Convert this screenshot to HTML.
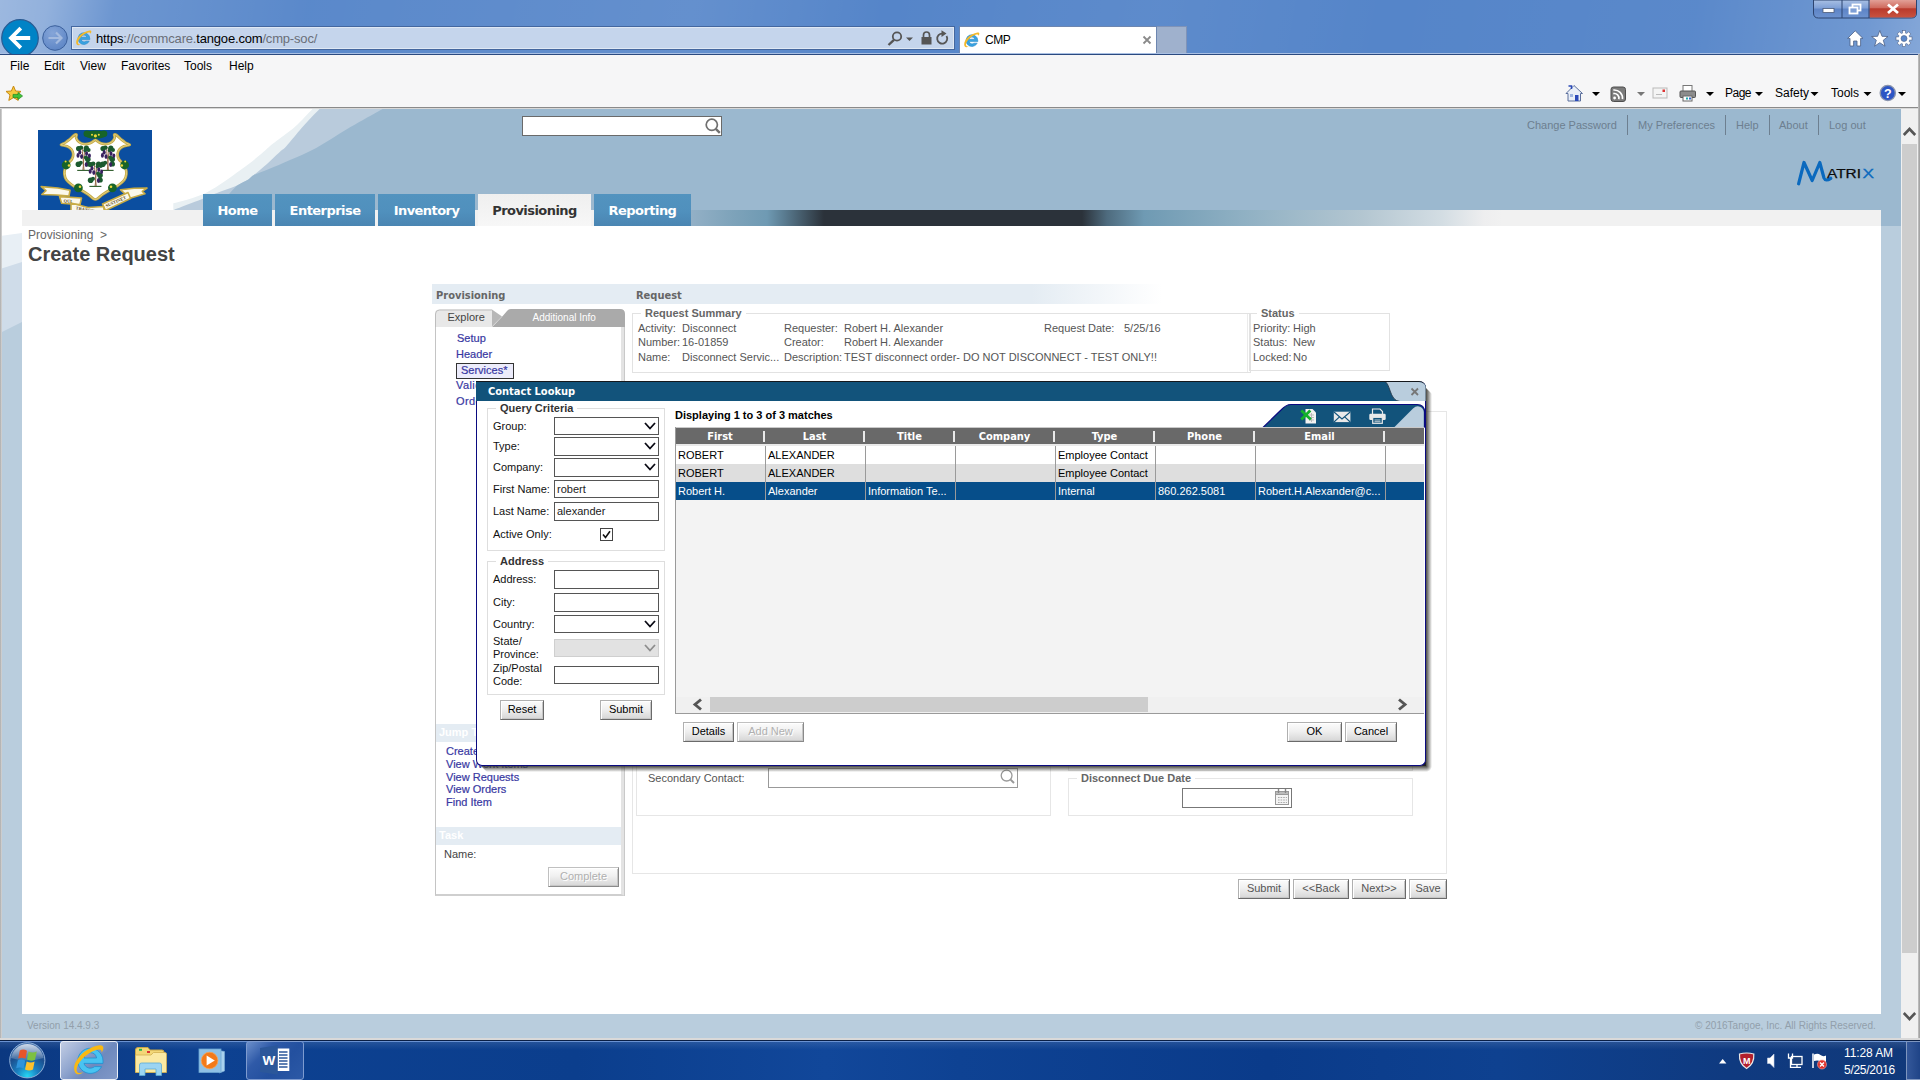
<!DOCTYPE html>
<html lang="en">
<head>
<meta charset="utf-8">
<title>CMP</title>
<style>
*{box-sizing:border-box;margin:0;padding:0}
html,body{width:1920px;height:1080px;overflow:hidden;background:#fff}
body{font-family:"Liberation Sans",Arial,sans-serif;font-size:11px;color:#555;position:relative}
.abs{position:absolute}
.t{position:absolute;white-space:nowrap;line-height:1}
/* ---------- browser chrome ---------- */
#titlebar{position:absolute;left:0;top:0;width:1920px;height:54px;
 background:
  linear-gradient(100deg,rgba(255,255,255,.42) 0,rgba(255,255,255,.36) 2.5%,rgba(255,255,255,.14) 6%,rgba(255,255,255,.03) 16%,rgba(255,255,255,.07) 30%,rgba(255,255,255,.09) 36%,rgba(255,255,255,0) 46%,rgba(255,255,255,.05) 60%,rgba(255,255,255,0) 72%,rgba(255,255,255,.03) 88%,rgba(255,255,255,.16) 97%,rgba(255,255,255,.28) 100%),
  #5585c9;}
#titleline{position:absolute;left:0;top:53px;width:1920px;height:2px;background:linear-gradient(#a9c0e4 0,#a9c0e4 50%,#2b4a80 50%,#2b4a80 100%)}
#menubar{position:absolute;left:0;top:55px;width:1920px;height:52px;background:#f6f6f7}
#chromeline{position:absolute;left:0;top:107px;width:1920px;height:2px;background:#8a8a8a;border-bottom:1px solid #d8d8d8}
.seg{font-family:"Liberation Sans",sans-serif;color:#000}
/* ---------- page ---------- */
#page{position:absolute;left:0;top:109px;width:1901px;height:931px;background:#b9cddd;overflow:hidden}
#taskbar{position:absolute;left:0;top:1040px;width:1920px;height:40px;
 background:linear-gradient(90deg,#0b3880 0,#0d4191 10%,#0b3e8d 30%,#11479a 43%,#0e4293 50%,#0a3b8a 66%,#0e4190 78%,#0f3a80 90%,#11397a 100%)}

/* page parts */
#hdr{position:absolute;left:0;top:109px;width:1901px;height:117px}
#white{position:absolute;left:22px;top:226px;width:1859px;height:788px;background:#fff}
#greyband{position:absolute;left:22px;top:210px;width:1859px;height:16px;
 background:linear-gradient(90deg,#f1f1f1 0,#f1f1f1 669px,#93b0c6 669px,#7ea3ba 710px,#6f9ab3 745px,#5a7c91 762px,#2b323a 802px,#2b323a 1060px,#4e6b7e 1085px,#6f9ab3 1122px,#8fb0c3 1220px,#b3c6d1 1340px,#d3dde3 1420px,#eeeeef 1462px,#f1f1f1 1480px,#f1f1f1 100%)}
.ntab{position:absolute;top:194px;height:32px;background:linear-gradient(#5293bf 0,#5090bd 55%,#4a85b2 100%);color:#fff;
 font-family:"DejaVu Sans",Verdana,sans-serif;font-weight:bold;font-size:13px;text-align:center;line-height:34px;letter-spacing:-0.55px}
.ntab.sel{background:linear-gradient(#efefef,#f7f7f7);color:#333}
.toplink{position:absolute;top:119px;font-size:11px;color:#6d7f90;line-height:13px;white-space:nowrap}
.topsep{position:absolute;top:115px;width:1px;height:20px;background:#6d7f90}
#search{position:absolute;left:522px;top:116px;width:200px;height:20px;background:#fff;border:1px solid #6a6a6a}

/* chrome widgets */
#addr{position:absolute;left:71px;top:26px;width:884px;height:24px;background:#c5d5ec;border:1px solid #44679f;box-shadow:inset 0 0 0 1px rgba(255,255,255,.45)}
#url{position:absolute;left:96px;top:31px;font-size:13px;line-height:16px;color:#6a6f78;white-space:nowrap;letter-spacing:-0.18px}
#url b{font-weight:normal;color:#000}
#btab{position:absolute;left:959px;top:26px;width:198px;height:27px;background:#fff;border:1px solid #6d86b0;border-bottom:none}
#newtab{position:absolute;left:1157px;top:26px;width:30px;height:27px;background:#9fb1cd;border:1px solid #7f93b8;border-left:none;border-bottom:none}
.menu{position:absolute;top:59px;font-size:12px;line-height:14px;color:#000;white-space:nowrap}
.cmd{position:absolute;top:86px;font-size:12px;line-height:14px;color:#000;white-space:nowrap}
.dd{position:absolute;width:0;height:0;border-left:4px solid transparent;border-right:4px solid transparent;border-top:4px solid #000}

/* content */
.tah{font-family:"DejaVu Sans Condensed","DejaVu Sans",Tahoma,sans-serif;font-weight:bold;font-size:11px}
#secthdr{position:absolute;left:432px;top:284px;width:740px;height:20px;background:linear-gradient(90deg,#e4ecf3 0,#e4ecf3 600px,#fff 730px)}
.fs{position:absolute;border:1px solid #e2e2e2}
.lg{position:absolute;background:#fff;padding:0 4px;font-weight:bold;font-size:11px;line-height:13px;color:#666;white-space:nowrap}
.x{position:absolute;white-space:nowrap;font-size:11px;line-height:13px;color:#555}
.lnk{position:absolute;white-space:nowrap;font-size:11px;line-height:13px;color:#3838a2;-webkit-text-stroke:.2px #3838a2}
.btn{position:absolute;height:20px;border:1px solid;border-color:#b0b0b0 #6a6a6a #6a6a6a #b0b0b0;background:linear-gradient(#fcfcfc 0,#f0f0f0 45%,#d6d6d6 100%);
 font-size:11px;line-height:17px;text-align:center;color:#000;white-space:nowrap;box-shadow:inset 1px 1px 0 #fff,inset -1px -1px 0 #c6c6c6}
.btn.g{color:#555}
.btn.dis{color:#b0b0b0;text-shadow:1px 1px 0 #fff;border-color:#c0c0c0 #8a8a8a #8a8a8a #c0c0c0}
.inp{position:absolute;background:#fff;border:1px solid #555;font-size:11px;line-height:15px;color:#222;padding-left:3px;white-space:nowrap}

/* dialog */
#dlgshadow{display:none}
#dlg{position:absolute;left:476px;top:381px;width:950px;height:385px;background:#fff;border:1px solid #0a0a80;border-top:none;border-radius:0 7px 6px 6px;overflow:hidden}
#dlgtitle{position:absolute;left:476px;top:381px;width:950px;height:20px;background:#12537b;border-radius:0 7px 0 0;overflow:hidden;border-top:1px solid #15181c}
.dl{position:absolute;white-space:nowrap;font-size:11px;line-height:13px;color:#111}
.dfs{position:absolute;border:1px solid #dedede}
.dlg-lg{position:absolute;background:#fff;padding:0 4px;font-weight:bold;font-size:11px;line-height:13px;color:#333;white-space:nowrap}
.sb{position:absolute;background:#fff;border:1px solid #555;height:18px}
.sb svg{position:absolute;right:2px;top:3px;width:12px;height:10px}
.sb.dis{background:#e2e2e2;border-color:#cfcfcf}
.gh{position:absolute;top:429px;margin-left:1px;height:16px;color:#fff;text-align:center;line-height:15px;white-space:nowrap}
.gsep{position:absolute;top:431px;width:2px;height:11px;background:#e9e9e9}
.gc{position:absolute;white-space:nowrap;font-size:11px;line-height:18px;height:18px;padding-left:3px;color:#000;border-right:1px solid #9a9a9a;overflow:hidden}
.gr{position:absolute;left:676px;width:748px;height:18px}
</style>
</head>
<body>
<div id="titlebar"></div>
<div id="titleline"></div>
<div id="menubar"></div>
<div id="chromeline"></div>
<div id="page"></div>

<!-- page header -->
<svg id="hdr" viewBox="0 109 1901 117">
 <rect x="0" y="109" width="1901" height="117" fill="#fff"/>
 <path fill="#e9f0f3" d="M312.4 109.0 C309.5 112.0 300.8 121.6 295.0 126.8 C289.2 131.9 282.0 136.8 277.8 140.0 C273.6 143.2 272.8 143.6 270.0 146.0 C267.2 148.4 265.7 150.2 260.8 154.2 C255.9 158.2 249.5 163.6 240.5 170.0 C231.5 176.4 217.9 186.8 206.7 192.4 C195.5 198.0 178.9 201.5 173.3 203.3 L173.3 210 L400 210 L400 109 Z"/>
 <path fill="#b9cbdc" d="M319.5 109.0 C317.1 111.5 309.7 119.1 305.0 124.2 C300.3 129.4 294.9 136.0 291.5 140.0 C288.1 144.0 286.6 146.1 284.7 148.0 C282.8 149.9 283.0 149.0 280.0 151.7 C277.0 154.4 271.1 160.3 266.7 164.2 C262.3 168.1 256.6 172.7 253.5 175.2 C250.4 177.7 250.9 177.8 248.3 179.4 C245.7 181.1 243.2 182.8 238.0 185.1 C232.8 187.4 223.1 190.7 217.0 193.0 C210.9 195.3 208.6 196.4 201.5 199.2 C194.4 202.0 178.9 207.9 174.4 209.6 L174.4 210 L400 210 L400 109 Z"/>
 <path fill="#9bb8cf" d="M382.5 109.0 C376.8 112.3 359.0 122.1 348.0 128.6 C337.0 135.1 325.9 142.8 316.2 148.0 C306.6 153.2 297.9 156.5 290.0 160.0 C282.1 163.5 275.1 166.5 269.0 169.0 C262.9 171.5 256.9 173.5 253.5 175.2 C250.1 176.9 250.9 177.8 248.3 179.4 C245.7 181.1 241.1 182.8 238.0 185.1 C234.9 187.4 233.8 188.8 230.0 193.0 C226.2 197.2 217.5 207.2 215.0 210.0 L1901 210 L1901 109 Z"/>
 <rect x="1881" y="210" width="20" height="16" fill="#9bb8cf"/>
 <rect x="0" y="210" width="22" height="16" fill="#fff"/>
</svg>
<svg class="abs" style="left:0;top:226px;width:22px;height:120px" viewBox="0 226 22 120">
 <rect x="0" y="226" width="22" height="120" fill="#b9cddd"/>
 <polygon fill="#cfdce9" points="0,226 22,226 22,322 0,333"/>
 <polygon fill="#e8eff5" points="0,226 22,226 22,262 0,269"/>
 <polygon fill="#fff" points="0,226 22,226 22,233 0,236"/>
</svg>
<div id="greyband"></div>
<div id="white"></div>
<div class="ntab" style="left:203px;width:69px">Home</div>
<div class="ntab" style="left:275px;width:100px">Enterprise</div>
<div class="ntab" style="left:378px;width:97px">Inventory</div>
<div class="ntab sel" style="left:478px;width:113px">Provisioning</div>
<div class="ntab" style="left:594px;width:97px">Reporting</div>
<div id="search"></div>
<svg class="abs" style="left:703px;top:116px;width:20px;height:20px" viewBox="0 0 20 20"><circle cx="8.800" cy="8.800" r="5.600" fill="none" stroke="#707070" stroke-width="1.700"/><path d="M12.800 12.800 L16.800 16.800" stroke="#707070" stroke-width="2.400"/></svg>
<div class="toplink" style="left:1527px">Change Password</div><div class="topsep" style="left:1627px"></div>
<div class="toplink" style="left:1638px">My Preferences</div><div class="topsep" style="left:1725px"></div>
<div class="toplink" style="left:1736px">Help</div><div class="topsep" style="left:1769px"></div>
<div class="toplink" style="left:1779px">About</div><div class="topsep" style="left:1818px"></div>
<div class="toplink" style="left:1829px">Log out</div>
<div class="t" style="left:27px;top:1021px;font-size:10px;color:#929fab">Version 14.4.9.3</div>
<div class="t" style="left:1695px;top:1021px;font-size:10px;color:#929fab;letter-spacing:.03px">© 2016Tangoe, Inc. All Rights Reserved.</div>
<div class="t" style="left:28px;top:229px;font-size:12px;color:#666">Provisioning &nbsp;&gt;</div>
<div class="t" style="left:28px;top:244px;font-size:20px;font-weight:bold;color:#444">Create Request</div>

<!-- browser chrome widgets -->
<svg class="abs" style="left:0;top:17px;width:72px;height:37px" viewBox="0 17 72 37">
 <circle cx="20" cy="38" r="18.3" fill="#0083c6" stroke="#2a5b93" stroke-width="1.2"/>
 <path d="M20.800 28.200 L11 38 L20.800 47.800 M11.500 38 H30.200" stroke="#fff" stroke-width="3.800" fill="none" stroke-linejoin="miter"/>
 <defs><radialGradient id="fwd" cx=".4" cy=".3" r=".8"><stop offset="0" stop-color="#85a5d8"/><stop offset="1" stop-color="#5a83c4"/></radialGradient></defs><circle cx="55" cy="38" r="12.3" fill="url(#fwd)" stroke="#3b609c" stroke-width="1"/>
 <path d="M48.5 38 L61 38 M56 32.5 L61.5 38 L56 43.5" stroke="#a3badf" stroke-width="2.2" fill="none"/>
</svg>
<div id="addr"></div>
<svg class="abs" style="left:75px;top:29px;width:18px;height:18px" viewBox="0 0 18 18">
 <path d="M14.8 9.6 A5.9 5.9 0 1 0 14.2 12.2 L11 12.2 A3.2 3.2 0 0 1 6 10.6 L14.8 10.6 Z M6 8.2 A3.1 3.1 0 0 1 11.9 8.2 Z" fill="#3aa3e0" stroke="#1b7fc4" stroke-width=".5"/>
 <path d="M1.8 15.6 C-1 11 6 3 14.5 1.6 C17 1.4 16.6 3.6 15.4 5 C15.6 3.6 14.6 3.2 12.6 3.8 C7 5.6 2 11.6 3.2 14.6 C3.6 15.6 4.8 15.6 6 15.2 C4.4 16.4 2.6 16.6 1.8 15.6 Z" fill="#f4b92a"/>
</svg>
<div id="url"><b>https</b>://commcare.<b>tangoe.com</b>/cmp-soc/</div>
<!-- addr right icons -->
<svg class="abs" style="left:884px;top:28px;width:70px;height:22px" viewBox="884 28 70 22">
 <circle cx="897" cy="36.5" r="4.2" fill="none" stroke="#555" stroke-width="1.8"/><path d="M894 39.8 L888.5 45" stroke="#555" stroke-width="2.4"/>
 <path d="M906 37.5 L913 37.5 L909.5 41 Z" fill="#555"/>
 <rect x="921.5" y="37" width="10" height="7.5" fill="#555"/><path d="M923.5 37 V35 A3 3 0 0 1 929.5 35 V37" fill="none" stroke="#555" stroke-width="1.7"/>
 <path d="M946.5 36 A5 5 0 1 1 942.5 33.6" fill="none" stroke="#555" stroke-width="1.8"/><path d="M941.5 30.3 L946.5 33.6 L941.5 37 Z" fill="#555"/>
</svg>
<div id="btab"></div>
<div id="newtab"></div>
<svg class="abs" style="left:963px;top:31px;width:18px;height:18px" viewBox="0 0 18 18">
 <path d="M14.8 9.6 A5.9 5.9 0 1 0 14.2 12.2 L11 12.2 A3.2 3.2 0 0 1 6 10.6 L14.8 10.6 Z M6 8.2 A3.1 3.1 0 0 1 11.9 8.2 Z" fill="#3aa3e0" stroke="#1b7fc4" stroke-width=".5"/>
 <path d="M1.8 15.6 C-1 11 6 3 14.5 1.6 C17 1.4 16.6 3.6 15.4 5 C15.6 3.6 14.6 3.2 12.6 3.8 C7 5.6 2 11.6 3.2 14.6 C3.6 15.6 4.8 15.6 6 15.2 C4.4 16.4 2.6 16.6 1.8 15.6 Z" fill="#f4b92a"/>
</svg>
<div class="t" style="left:985px;top:33px;font-size:12px;line-height:15px;color:#000;letter-spacing:-.5px">CMP</div>
<svg class="abs" style="left:1142px;top:35px;width:10px;height:10px" viewBox="0 0 10 10"><path d="M1.5 1.5 L8.5 8.5 M8.5 1.5 L1.5 8.5" stroke="#8a8a8a" stroke-width="1.8"/></svg>
<div class="menu" style="left:10px">File</div>
<div class="menu" style="left:44px">Edit</div>
<div class="menu" style="left:80px">View</div>
<div class="menu" style="left:121px">Favorites</div>
<div class="menu" style="left:184px">Tools</div>
<div class="menu" style="left:229px">Help</div>
<!-- favorites star -->
<svg class="abs" style="left:5px;top:85px;width:19px;height:18px" viewBox="0 0 19 18">
 <path d="M8.5 1 L10.6 6 L16 6.4 L12 10 L13.2 15.4 L8.5 12.6 L3.8 15.4 L5 10 L1 6.4 L6.4 6 Z" fill="#f7c93e" stroke="#c98a12" stroke-width="1"/>
 <path d="M8 9.4 H13 V7.4 L17.6 11 L13 14.6 V12.6 H8 Z" fill="#3fc23a" stroke="#1f8a1c" stroke-width=".7"/>
</svg>

<!-- window controls -->
<svg class="abs" style="left:1812px;top:0;width:106px;height:20px" viewBox="1812 0 106 20">
 <defs>
  <linearGradient id="wbg" x1="0" y1="0" x2="0" y2="1"><stop offset="0" stop-color="#a9c0e4"/><stop offset=".45" stop-color="#7e9fd6"/><stop offset=".5" stop-color="#5e84c6"/><stop offset="1" stop-color="#6d93d0"/></linearGradient>
  <linearGradient id="wbr" x1="0" y1="0" x2="0" y2="1"><stop offset="0" stop-color="#e2a097"/><stop offset=".45" stop-color="#cf6a5d"/><stop offset=".5" stop-color="#b93a2c"/><stop offset="1" stop-color="#c9533f"/></linearGradient>
 </defs>
 <path d="M1813.5 0 H1916.5 V13 Q1916.5 18 1911.5 18 H1818.5 Q1813.5 18 1813.5 13 Z" fill="url(#wbg)" stroke="#2d4470" stroke-width="1"/>
 <path d="M1869.5 0 H1916 V13 Q1916 17.5 1911.5 17.5 H1869.5 Z" fill="url(#wbr)"/>
 <path d="M1842 0 V18 M1869 0 V18" stroke="#2d4470" stroke-width="1"/>
 <rect x="1823" y="8.5" width="11" height="4" fill="#fff" stroke="#4b5a78" stroke-width=".8"/>
 <rect x="1852.500" y="4.500" width="8" height="6" fill="none" stroke="#fff" stroke-width="1.8"/>
 <rect x="1849.500" y="7.500" width="8" height="6" fill="#7e9fd6" stroke="#fff" stroke-width="1.8"/>
 <path d="M1888 4.500 L1898 13 M1898 4.500 L1888 13" stroke="#fff" stroke-width="2.8"/>
</svg>
<!-- home star gear -->
<svg class="abs" style="left:1846px;top:29px;width:70px;height:20px" viewBox="1846 29 70 20">
 <path d="M1855.200 30.800 L1847.600 38.400 H1850 V46 H1853.600 V41 H1857 V46 H1860.600 V38.400 H1863 Z" fill="#fff" stroke="#4a5f86" stroke-width=".8"/>
 <path d="M1879.800 30.500 L1882 36.300 L1888 36.500 L1883.300 40.200 L1885 46.200 L1879.800 42.700 L1874.600 46.200 L1876.300 40.200 L1871.600 36.500 L1877.600 36.300 Z" fill="#fff" stroke="#4a5f86" stroke-width=".8"/>
 <g transform="translate(1904 38.500)">
  <g fill="#fff" stroke="#4a5f86" stroke-width=".6">
   <rect x="-1.600" y="-8" width="3.200" height="16" /><rect x="-1.600" y="-8" width="3.200" height="16" transform="rotate(45)"/><rect x="-1.600" y="-8" width="3.200" height="16" transform="rotate(90)"/><rect x="-1.600" y="-8" width="3.200" height="16" transform="rotate(135)"/>
  </g>
  <circle r="5.400" fill="#fff"/><circle r="3" fill="#5a88cb" stroke="#4a5f86" stroke-width=".6"/>
 </g>
</svg>
<!-- command bar -->
<svg class="abs" style="left:1564px;top:84px;width:345px;height:19px" viewBox="1564 84 345 19">
 <!-- home -->
 <path d="M1574 85.500 L1566 93.500 H1568 V101 H1580.500 V93.500 H1582.500 Z" fill="#e8eef8" stroke="#5b6f9c" stroke-width="1"/>
 <rect x="1575" y="95" width="3.500" height="6" fill="#2a49b8"/><rect x="1570" y="94" width="3" height="3" fill="#9db4e0"/>
 <path d="M1568.500 86 h3 v3" fill="none" stroke="#2a49b8" stroke-width="1.500"/>
 <path d="M1592 92 h8 l-4 4 z" fill="#000"/>
 <!-- rss -->
 <rect x="1611" y="87" width="14.500" height="14.500" rx="2.500" fill="#7b7b7b" stroke="#4f4f4f" stroke-width="1"/>
 <circle cx="1614.600" cy="98" r="1.400" fill="#fff"/><path d="M1613.300 93.600 A4.600 4.600 0 0 1 1618.800 99.200 M1613.300 90 A8.300 8.300 0 0 1 1622.500 99.200" stroke="#fff" stroke-width="1.600" fill="none"/>
 <path d="M1637 92 h8 l-4 4 z" fill="#777"/>
 <!-- mail -->
 <rect x="1653" y="88" width="14" height="10" fill="#f4f4f4" stroke="#b9b9b9" stroke-width="1"/><rect x="1662.500" y="89.500" width="2.500" height="2.500" fill="#d33"/><path d="M1656 94.500 h6" stroke="#bbb" stroke-width="1"/>
 <!-- printer -->
 <rect x="1683" y="85.500" width="9" height="6" fill="#fff" stroke="#777" stroke-width="1"/>
 <rect x="1680" y="91" width="15.500" height="6.500" rx="1" fill="#8c8c8c" stroke="#555" stroke-width="1"/>
 <rect x="1683" y="96" width="9" height="5" fill="#fff" stroke="#666" stroke-width="1"/><rect x="1686" y="97.500" width="2" height="2" fill="#2aa"/><rect x="1689" y="97.500" width="2" height="2" fill="#36c"/>
 <path d="M1706 92 h8 l-4 4 z" fill="#000"/>
 <path d="M1755 92 h8 l-4 4 z" fill="#000"/>
 <path d="M1810.500 92 h8 l-4 4 z" fill="#000"/>
 <path d="M1863.500 92 h8 l-4 4 z" fill="#000"/>
 <!-- help -->
 <circle cx="1887.800" cy="93" r="7.600" fill="#2d56c4" stroke="#8a94ad" stroke-width="1.400"/>
 <text x="1887.800" y="97.600" font-family="Liberation Sans, sans-serif" font-weight="bold" font-size="12.500" fill="#fff" text-anchor="middle">?</text>
 <path d="M1898 92 h8 l-4 4 z" fill="#000"/>
</svg>
<div class="cmd" style="left:1725px;letter-spacing:-.5px">Page</div>
<div class="cmd" style="left:1775px">Safety</div>
<div class="cmd" style="left:1831px">Tools</div>

<!-- ======= main content (behind dialog) ======= -->
<div id="secthdr"></div>
<div class="t tah" style="left:436px;top:289px;color:#666;line-height:13px">Provisioning</div>
<div class="t tah" style="left:636px;top:289px;color:#666;line-height:13px">Request</div>
<!-- left panel -->
<div class="abs" style="left:435px;top:326px;width:190px;height:570px;background:#fff;border-left:1px solid #c4c4c4;border-right:4px solid #e3e3e3;border-bottom:2px solid #cfcfcf"></div>
<div class="abs" style="left:624px;top:326px;width:1px;height:570px;background:#c9c9c9"></div>
<svg class="abs" style="left:435px;top:309px;width:190px;height:18px" viewBox="435 309 190 18">
 <path d="M492 327 L497 322 Q503 316 507 311 Q508.500 309 511 309 H620 Q625 309 625 314 V327 Z" fill="#aaaaaa"/>
 <path d="M492 309.500 L502 316.500 L492 326.500 Z" fill="#b7b7b7"/>
 <path d="M435 327 V314 Q435 309.500 439.500 309.500 H492 V327 Z" fill="#e8e8e8"/>
 <path d="M435.500 327 V314 Q435.500 310 439.500 310 H492" fill="none" stroke="#bdbdbd" stroke-width="1"/>
 <text x="447.500" y="321" font-family="Liberation Sans, sans-serif" font-size="11" fill="#444">Explore</text>
 <text x="532.500" y="320.800" font-family="Liberation Sans, sans-serif" font-size="10" fill="#fff">Additional Info</text>
</svg>
<div class="lnk" style="left:457px;top:332px">Setup</div>
<div class="lnk" style="left:456px;top:348px">Header</div>
<div class="abs" style="left:456px;top:363px;width:58px;height:16px;background:#ececfb;border:1px solid #333"></div>
<div class="lnk" style="left:461px;top:364px">Services*</div>
<div class="lnk" style="left:456px;top:379px;letter-spacing:.4px">Validation</div>
<div class="lnk" style="left:456px;top:395px;letter-spacing:.4px">Orders</div>
<div class="abs" style="left:436px;top:724px;width:185px;height:18px;background:#e4ecf3"></div>
<div class="t" style="left:439px;top:726px;font-size:11px;line-height:13px;font-weight:bold;color:#fff">Jump To</div>
<div class="lnk" style="left:446px;top:745px">Create Request</div>
<div class="lnk" style="left:446px;top:758px">View Work Items</div>
<div class="lnk" style="left:446px;top:771px">View Requests</div>
<div class="lnk" style="left:446px;top:783px">View Orders</div>
<div class="lnk" style="left:446px;top:796px">Find Item</div>
<div class="abs" style="left:436px;top:827px;width:185px;height:18px;background:#e4ecf3"></div>
<div class="t" style="left:439px;top:829px;font-size:11px;line-height:13px;font-weight:bold;color:#fff">Task</div>
<div class="x" style="left:444px;top:848px;color:#444">Name:</div>
<div class="btn dis" style="left:548px;top:867px;width:71px">Complete</div>
<!-- request summary -->
<div class="fs" style="left:632px;top:313px;width:619px;height:60px"></div>
<div class="abs" style="left:1247px;top:314px;width:1px;height:58px;background:#ebebeb"></div>
<div class="lg" style="left:641px;top:307px">Request Summary</div>
<div class="x" style="left:638px;top:322px">Activity:</div><div class="x" style="left:682px;top:322px">Disconnect</div>
<div class="x" style="left:638px;top:336px">Number:</div><div class="x" style="left:682px;top:336px">16-01859</div>
<div class="x" style="left:638px;top:351px">Name:</div><div class="x" style="left:682px;top:351px">Disconnect Servic...</div>
<div class="x" style="left:784px;top:322px">Requester:</div><div class="x" style="left:844px;top:322px">Robert H. Alexander</div>
<div class="x" style="left:784px;top:336px">Creator:</div><div class="x" style="left:844px;top:336px">Robert H. Alexander</div>
<div class="x" style="left:784px;top:351px">Description:</div><div class="x" style="left:844px;top:351px">TEST disconnect order- DO NOT DISCONNECT - TEST ONLY!!</div>
<div class="x" style="left:1044px;top:322px">Request Date:</div><div class="x" style="left:1124px;top:322px">5/25/16</div>
<!-- status -->
<div class="fs" style="left:1249px;top:313px;width:141px;height:58px"></div>
<div class="lg" style="left:1257px;top:307px">Status</div>
<div class="x" style="left:1253px;top:322px">Priority:</div><div class="x" style="left:1293px;top:322px">High</div>
<div class="x" style="left:1253px;top:336px">Status:</div><div class="x" style="left:1293px;top:336px">New</div>
<div class="x" style="left:1253px;top:351px">Locked:</div><div class="x" style="left:1293px;top:351px">No</div>
<!-- right big panel -->
<div class="fs" style="left:632px;top:411px;width:815px;height:463px;border-color:#e6e6e6"></div>
<div class="fs" style="left:636px;top:420px;width:415px;height:396px;border-color:#e6e6e6"></div>
<div class="fs" style="left:1068px;top:420px;width:345px;height:351px;border-color:#e6e6e6"></div>
<div class="fs" style="left:1068px;top:778px;width:345px;height:38px;border-color:#e6e6e6"></div>
<div class="lg" style="left:1077px;top:772px">Disconnect Due Date</div>
<div class="inp" style="left:1182px;top:788px;width:110px;height:20px;border-color:#777"></div>
<svg class="abs" style="left:1274px;top:788px;width:17px;height:18px" viewBox="0 0 17 18">
 <rect x="1.5" y="3.5" width="13" height="13" fill="#f4f4f4" stroke="#999"/><rect x="1.5" y="3.5" width="13" height="3" fill="#bbb" stroke="#999"/>
 <path d="M4.500 1 v4 M11.500 1 v4" stroke="#888" stroke-width="1.400"/>
 <path d="M4 9.500 h9 M4 12 h9 M4 14.500 h9" stroke="#aaa" stroke-width="1.200" stroke-dasharray="1.600 1"/>
</svg>
<div class="x" style="left:648px;top:772px">Secondary Contact:</div>
<div class="inp" style="left:768px;top:768px;width:250px;height:20px;border-color:#999"></div>
<svg class="abs" style="left:998px;top:767px;width:20px;height:20px" viewBox="0 0 20 20"><circle cx="8.600" cy="8.600" r="5.400" fill="none" stroke="#999" stroke-width="1.300"/><path d="M12.600 12.600 L16 16" stroke="#999" stroke-width="2"/></svg>
<div class="btn g" style="left:1238px;top:879px;width:52px">Submit</div>
<div class="btn g" style="left:1293px;top:879px;width:56px">&lt;&lt;Back</div>
<div class="btn g" style="left:1352px;top:879px;width:54px">Next&gt;&gt;</div>
<div class="btn g" style="left:1409px;top:879px;width:38px">Save</div>

<!-- ======= dialog ======= -->
<div id="dlgshadow"></div>
<div class="abs" style="left:1426px;top:388px;width:6px;height:378px;background:linear-gradient(90deg,rgba(58,58,52,.92),rgba(100,100,100,0));clip-path:polygon(0 0,100% 6px,100% 100%,0 100%)"></div>
<div class="abs" style="left:481px;top:766px;width:945px;height:6px;background:linear-gradient(180deg,rgba(58,58,52,.92),rgba(100,100,100,0));clip-path:polygon(0 0,100% 0,100% 100%,6px 100%)"></div>
<div class="abs" style="left:1426px;top:766px;width:6px;height:6px;background:radial-gradient(circle at 0 0,rgba(58,58,52,.92) 0,rgba(100,100,100,0) 6px)"></div>
<div class="abs" style="left:1419px;top:759px;width:7px;height:7px;background:#222"></div>
<div class="abs" style="left:476px;top:759px;width:7px;height:7px;background:linear-gradient(45deg,rgba(0,0,0,0) 50%,#222 50%)"></div>
<div id="dlg"></div>
<div id="dlgtitle">
 <svg class="abs" style="left:905px;top:0;width:45px;height:20px" viewBox="0 0 45 20">
  <path d="M2 -1 C10 -1 7.500 19 19 19.500 L45 19.500 L45 -1 Z" fill="#b9cddd" stroke="#26394a" stroke-width=".9"/>
  <path d="M30.500 6.500 L37 13 M37 6.500 L30.500 13" stroke="#777" stroke-width="1.800"/>
 </svg>
</div>
<div class="t tah" style="left:488px;top:385px;color:#fff;line-height:13px">Contact Lookup</div>
<!-- query criteria -->
<div class="dfs" style="left:487px;top:408px;width:178px;height:143px"></div>
<div class="dlg-lg" style="left:496px;top:402px">Query Criteria</div>
<div class="dl" style="left:493px;top:420px">Group:</div><div class="sb" style="left:554px;top:417px;width:105px"><svg viewBox="0 0 12 10"><path d="M1 2 L6 7.500 L11 2" fill="none" stroke="#0a0a14" stroke-width="1.800"/></svg></div>
<div class="dl" style="left:493px;top:440px">Type:</div><div class="sb" style="left:554px;top:437px;width:105px;height:19px"><svg viewBox="0 0 12 10"><path d="M1 2 L6 7.500 L11 2" fill="none" stroke="#0a0a14" stroke-width="1.800"/></svg></div>
<div class="dl" style="left:493px;top:461px">Company:</div><div class="sb" style="left:554px;top:458px;width:105px;height:19px"><svg viewBox="0 0 12 10"><path d="M1 2 L6 7.500 L11 2" fill="none" stroke="#0a0a14" stroke-width="1.800"/></svg></div>
<div class="dl" style="left:493px;top:483px">First Name:</div><div class="inp" style="left:554px;top:480px;width:105px;height:18px;line-height:16px;padding-left:2px">robert</div>
<div class="dl" style="left:493px;top:505px">Last Name:</div><div class="inp" style="left:554px;top:502px;width:105px;height:19px;line-height:16px;padding-left:2px">alexander</div>
<div class="dl" style="left:493px;top:528px">Active Only:</div>
<div class="abs" style="left:600px;top:528px;width:13px;height:13px;background:#fff;border:1px solid #444"></div>
<svg class="abs" style="left:600px;top:528px;width:13px;height:13px" viewBox="0 0 13 13"><path d="M3 6.500 L5.500 9.500 L10 3.200" fill="none" stroke="#111" stroke-width="1.600"/></svg>
<!-- address -->
<div class="dfs" style="left:487px;top:561px;width:178px;height:134px"></div>
<div class="dlg-lg" style="left:496px;top:555px">Address</div>
<div class="dl" style="left:493px;top:573px">Address:</div><div class="inp" style="left:554px;top:570px;width:105px;height:19px"></div>
<div class="dl" style="left:493px;top:596px">City:</div><div class="inp" style="left:554px;top:593px;width:105px;height:19px"></div>
<div class="dl" style="left:493px;top:618px">Country:</div><div class="sb" style="left:554px;top:615px;width:105px"><svg viewBox="0 0 12 10"><path d="M1 2 L6 7.500 L11 2" fill="none" stroke="#0a0a14" stroke-width="1.800"/></svg></div>
<div class="dl" style="left:493px;top:635px">State/</div><div class="dl" style="left:493px;top:648px">Province:</div><div class="sb dis" style="left:554px;top:639px;width:105px"><svg viewBox="0 0 12 10"><path d="M1 2 L6 7.500 L11 2" fill="none" stroke="#8d8d8d" stroke-width="1.800"/></svg></div>
<div class="dl" style="left:493px;top:662px">Zip/Postal</div><div class="dl" style="left:493px;top:675px">Code:</div><div class="inp" style="left:554px;top:666px;width:105px;height:18px"></div>
<div class="btn" style="left:500px;top:700px;width:44px">Reset</div>
<div class="btn" style="left:600px;top:700px;width:52px">Submit</div>
<!-- results -->
<div class="dl" style="left:675px;top:409px;font-weight:bold;color:#000">Displaying 1 to 3 of 3 matches</div>
<svg class="abs" style="left:1260px;top:402px;width:166px;height:26px" viewBox="1260 402 166 26">
 <path d="M1263 427.500 L1281 410 Q1286 404.500 1291 404.500 H1417 Q1424.500 404.500 1424.500 412 V427.500 Z" fill="#12537b"/><path d="M1263 427.500 L1281 410 Q1286 404.500 1291 404.500 H1417 Q1424.500 404.500 1424.500 412 V427.500" fill="none" stroke="#0a0a80" stroke-width="1.200"/>
 <path d="M1394 427.500 L1413 408.500 Q1416 405.800 1419 406.500 Q1423.500 407.500 1423.800 412 V427.500 Z" fill="#b9cddd"/>
 <!-- excel -->
 <path d="M1305.500 409 H1312.500 L1316 412.500 V423.500 H1305.500 Z" fill="#f2f2f2"/>
 <path d="M1309 415 h5 M1309 417.500 h5 M1309 420 h5 M1311.500 413 v9" stroke="#b5b5b5" stroke-width=".9"/>
 <path d="M1301.300 410.500 L1310.800 419.500 M1310.300 410.500 L1301.300 419.500" stroke="#12b12a" stroke-width="2.800"/>
 <!-- mail -->
 <rect x="1333.800" y="411.700" width="16.600" height="10.400" fill="#e9e9e9"/>
 <path d="M1334 412 L1342 419 L1350.200 412 M1334 422 L1339.500 416.800 M1350.200 422 L1344.700 416.800" fill="none" stroke="#12537b" stroke-width="1.100"/>
 <!-- printer -->
 <path d="M1372.500 414 V409 H1380 L1382.500 411.500 V414" fill="#12537b" stroke="#e9e9e9" stroke-width="1.200"/>
 <rect x="1369.300" y="413.800" width="16.400" height="6.200" rx="1.200" fill="#e9e9e9"/>
 <rect x="1372.700" y="417.300" width="9.600" height="6" fill="#12537b" stroke="#e9e9e9" stroke-width="1.200"/>
 <path d="M1374.500 420 h6 M1374.500 421.700 h6" stroke="#e9e9e9" stroke-width=".8"/>
</svg>
<div class="abs" style="left:675px;top:427px;width:749px;height:287px;background:#f3f3f3;border-left:1px solid #9a9a9a;border-bottom:1px solid #9a9a9a"></div>
<div class="abs" style="left:676px;top:427px;width:748px;height:17px;background:#696969;border-top:1px solid #c9c9c9"></div>
<div class="abs" style="left:676px;top:444px;width:748px;height:2px;background:#e9e9e9"></div>
<div class="gh tah" style="left:676px;width:86px">First</div><div class="gsep" style="left:763px"></div>
<div class="gh tah" style="left:765px;width:97px">Last</div><div class="gsep" style="left:863px"></div>
<div class="gh tah" style="left:865px;width:87px">Title</div><div class="gsep" style="left:953px"></div>
<div class="gh tah" style="left:955px;width:97px">Company</div><div class="gsep" style="left:1053px"></div>
<div class="gh tah" style="left:1055px;width:97px">Type</div><div class="gsep" style="left:1153px"></div>
<div class="gh tah" style="left:1155px;width:97px">Phone</div><div class="gsep" style="left:1253px"></div>
<div class="gh tah" style="left:1255px;width:127px">Email</div><div class="gsep" style="left:1383px"></div>

<div class="gr" style="top:446px;background:#fff"></div>
<div class="gc" style="left:676px;top:446px;width:90px;padding-left:2px;color:#000">ROBERT</div><div class="gc" style="left:765px;top:446px;width:101px;color:#000">ALEXANDER</div><div class="gc" style="left:865px;top:446px;width:91px;color:#000"></div><div class="gc" style="left:955px;top:446px;width:101px;color:#000"></div><div class="gc" style="left:1055px;top:446px;width:101px;color:#000">Employee Contact</div><div class="gc" style="left:1155px;top:446px;width:101px;color:#000"></div><div class="gc" style="left:1255px;top:446px;width:131px;color:#000"></div>
<div class="gr" style="top:464px;background:#dedede"></div>
<div class="gc" style="left:676px;top:464px;width:90px;padding-left:2px;color:#000">ROBERT</div><div class="gc" style="left:765px;top:464px;width:101px;color:#000">ALEXANDER</div><div class="gc" style="left:865px;top:464px;width:91px;color:#000"></div><div class="gc" style="left:955px;top:464px;width:101px;color:#000"></div><div class="gc" style="left:1055px;top:464px;width:101px;color:#000">Employee Contact</div><div class="gc" style="left:1155px;top:464px;width:101px;color:#000"></div><div class="gc" style="left:1255px;top:464px;width:131px;color:#000"></div>
<div class="gr" style="top:482px;background:#064e8a"></div>
<div class="gc" style="left:676px;top:482px;width:90px;padding-left:2px;color:#fff">Robert H.</div><div class="gc" style="left:765px;top:482px;width:101px;color:#fff">Alexander</div><div class="gc" style="left:865px;top:482px;width:91px;color:#fff">Information Te...</div><div class="gc" style="left:955px;top:482px;width:101px;color:#fff"></div><div class="gc" style="left:1055px;top:482px;width:101px;color:#fff">Internal</div><div class="gc" style="left:1155px;top:482px;width:101px;color:#fff">860.262.5081</div><div class="gc" style="left:1255px;top:482px;width:131px;color:#fff">Robert.H.Alexander@c...</div>

<!-- h scrollbar -->
<div class="abs" style="left:676px;top:697px;width:748px;height:16px;background:#f0f0f0"></div>
<div class="abs" style="left:710px;top:697px;width:438px;height:15px;background:#cdcdcd"></div>
<svg class="abs" style="left:691px;top:698px;width:13px;height:13px" viewBox="0 0 13 13"><path d="M10 1.500 L4 6.500 L10 11.500" fill="none" stroke="#555" stroke-width="2.900"/></svg>
<svg class="abs" style="left:1396px;top:698px;width:13px;height:13px" viewBox="0 0 13 13"><path d="M3 1.500 L9 6.500 L3 11.500" fill="none" stroke="#555" stroke-width="2.900"/></svg>
<div class="btn" style="left:683px;top:722px;width:51px">Details</div>
<div class="btn dis" style="left:737px;top:722px;width:67px">Add New</div>
<div class="btn" style="left:1287px;top:722px;width:55px">OK</div>
<div class="btn" style="left:1345px;top:722px;width:52px">Cancel</div>

<!-- flag -->
<svg class="abs" style="left:38px;top:130px;width:114px;height:80px" viewBox="0 0 114 80">
 <rect width="114" height="80" fill="#0b4ea0"/>
 <!-- ribbon -->
 <g fill="#fbf8ea" stroke="#c7ab45" stroke-width="1.600" stroke-linejoin="round">
  <path d="M3.200 56.600 L20 58 L32 60.300 L31 66 L19 65 L3.800 64.500 L8 60.600 Z"/>
  <path d="M82.500 59.800 L96 58.300 L109 58 L104.300 61.300 L107 63.800 L92 68.200 Z"/>
  <path d="M21.500 66.600 L43.500 68 L42 74.600 L23.700 73.200 Z"/>
  <path d="M64.500 74 L90 62.500 L92.500 68.500 L67.500 80.500 Z"/>
  <path d="M33 73 L50 77.500 L65.500 76.500 L67 84 L33 84 Z"/>
 </g>
 <text x="25.500" y="72.300" font-family="Liberation Serif, serif" font-size="4.400" font-weight="bold" fill="#5d4d25" transform="rotate(4 25.500 72.300)">QUI</text>
 <text x="37.500" y="79.300" font-family="Liberation Serif, serif" font-size="4.400" font-weight="bold" fill="#5d4d25" transform="rotate(10 37.500 79.300)">TRANSTULIT</text>
 <text x="68.500" y="77.400" font-family="Liberation Serif, serif" font-size="4.400" font-weight="bold" fill="#5d4d25" transform="rotate(-24 68.500 77.400)">SUSTINET</text>
 <!-- shield -->
 <path d="M57.4 9.8 C56.5 10.4 53.9 12.5 52.0 13.2 C50.1 13.9 47.8 14.2 46.0 14.0 C44.2 13.8 42.3 13.0 41.0 12.0 C39.7 11.0 38.6 9.2 38.2 8.0 C37.8 6.8 38.9 5.3 38.6 4.8 C38.3 4.3 37.6 4.3 36.5 5.0 C35.4 5.7 33.5 7.8 32.0 9.0 C30.5 10.2 29.0 11.5 27.5 12.5 C26.0 13.5 22.8 14.2 23.0 14.8 C23.2 15.4 27.2 15.5 29.0 16.3 C30.8 17.1 32.5 18.2 33.5 19.5 C34.5 20.8 35.1 22.4 35.2 24.0 C35.3 25.6 34.8 27.5 34.0 29.0 C33.2 30.5 31.6 31.5 30.5 33.0 C29.4 34.5 28.0 36.2 27.3 38.0 C26.6 39.8 26.2 42.0 26.4 44.0 C26.6 46.0 27.2 48.2 28.5 50.0 C29.8 51.8 31.8 53.4 34.0 55.0 C36.2 56.6 39.3 58.0 42.0 59.5 C44.7 61.0 47.4 62.6 50.0 64.3 C52.6 66.0 54.9 69.5 57.4 69.5 C59.9 69.5 62.2 66.0 64.8 64.3 C67.4 62.6 70.1 61.0 72.8 59.5 C75.5 58.0 78.5 56.6 80.8 55.0 C83.0 53.4 85.0 51.8 86.3 50.0 C87.6 48.2 88.2 46.0 88.4 44.0 C88.6 42.0 88.2 39.8 87.5 38.0 C86.8 36.2 85.4 34.5 84.3 33.0 C83.2 31.5 81.6 30.5 80.8 29.0 C80.0 27.5 79.5 25.6 79.6 24.0 C79.7 22.4 80.3 20.8 81.3 19.5 C82.3 18.2 84.0 17.1 85.8 16.3 C87.5 15.5 91.5 15.4 91.8 14.8 C92.0 14.2 88.8 13.5 87.3 12.5 C85.8 11.5 84.3 10.2 82.8 9.0 C81.3 7.8 79.4 5.7 78.3 5.0 C77.2 4.3 76.5 4.3 76.2 4.8 C75.9 5.3 77.0 6.8 76.6 8.0 C76.2 9.2 75.1 11.0 73.8 12.0 C72.5 13.0 70.6 13.8 68.8 14.0 C67.0 14.2 64.7 13.9 62.8 13.2 C60.9 12.5 58.3 10.4 57.4 9.8 Z" fill="#fff" stroke="#c7ab45" stroke-width="2.700" stroke-linejoin="round"/>
 <path d="M57.4 9.8 C56.5 10.4 53.9 12.5 52.0 13.2 C50.1 13.9 47.8 14.2 46.0 14.0 C44.2 13.8 42.3 13.0 41.0 12.0 C39.7 11.0 38.6 9.2 38.2 8.0 C37.8 6.8 38.9 5.3 38.6 4.8 C38.3 4.3 37.6 4.3 36.5 5.0 C35.4 5.7 33.5 7.8 32.0 9.0 C30.5 10.2 29.0 11.5 27.5 12.5 C26.0 13.5 22.8 14.2 23.0 14.8 C23.2 15.4 27.2 15.5 29.0 16.3 C30.8 17.1 32.5 18.2 33.5 19.5 C34.5 20.8 35.1 22.4 35.2 24.0 C35.3 25.6 34.8 27.5 34.0 29.0 C33.2 30.5 31.6 31.5 30.5 33.0 C29.4 34.5 28.0 36.2 27.3 38.0 C26.6 39.8 26.2 42.0 26.4 44.0 C26.6 46.0 27.2 48.2 28.5 50.0 C29.8 51.8 31.8 53.4 34.0 55.0 C36.2 56.6 39.3 58.0 42.0 59.5 C44.7 61.0 47.4 62.6 50.0 64.3 C52.6 66.0 54.9 69.5 57.4 69.5 C59.9 69.5 62.2 66.0 64.8 64.3 C67.4 62.6 70.1 61.0 72.8 59.5 C75.5 58.0 78.5 56.6 80.8 55.0 C83.0 53.4 85.0 51.8 86.3 50.0 C87.6 48.2 88.2 46.0 88.4 44.0 C88.6 42.0 88.2 39.8 87.5 38.0 C86.8 36.2 85.4 34.5 84.3 33.0 C83.2 31.5 81.6 30.5 80.8 29.0 C80.0 27.5 79.5 25.6 79.6 24.0 C79.7 22.4 80.3 20.8 81.3 19.5 C82.3 18.2 84.0 17.1 85.8 16.3 C87.5 15.5 91.5 15.4 91.8 14.8 C92.0 14.2 88.8 13.5 87.3 12.5 C85.8 11.5 84.3 10.2 82.8 9.0 C81.3 7.8 79.4 5.7 78.3 5.0 C77.2 4.3 76.5 4.3 76.2 4.8 C75.9 5.3 77.0 6.8 76.6 8.0 C76.2 9.2 75.1 11.0 73.8 12.0 C72.5 13.0 70.6 13.8 68.8 14.0 C67.0 14.2 64.7 13.9 62.8 13.2 C60.9 12.5 58.3 10.4 57.4 9.8 Z" fill="none" stroke="#eadf9f" stroke-width=".700"/>
 <!-- leaf clusters on border -->
 <g fill="#176428"><ellipse cx="57.400" cy="4.600" rx="11.500" ry="4"/><ellipse cx="49" cy="3.800" rx="3.500" ry="3.200"/><ellipse cx="65.800" cy="3.800" rx="3.500" ry="3.200"/><circle cx="28.200" cy="35" r="4.400"/><circle cx="86.600" cy="35" r="4.400"/><circle cx="40.400" cy="57.800" r="4.400"/><circle cx="74.400" cy="57.800" r="4.400"/></g>
 <g fill="#efd83a"><circle cx="57.400" cy="5.800" r="1.600"/><circle cx="54" cy="4.800" r="1"/><circle cx="60.800" cy="4.800" r="1"/><circle cx="31" cy="35.500" r="1.300"/><circle cx="27.600" cy="31.500" r="1"/><circle cx="83.800" cy="35.500" r="1.300"/><circle cx="87.200" cy="31.500" r="1"/><circle cx="42" cy="56.800" r="1.300"/><circle cx="73" cy="56.800" r="1.300"/></g>
 <!-- vines -->
 <path d="M44.7 17 C43.2 23 46.7 29 44.900000000000006 40 M46.2 18 C47.400000000000006 25 44.2 31 46.0 40" stroke="#9a6b4a" stroke-width="1" fill="none"/><path d="M39.2 40.4 H51.2" stroke="#2d5a2a" stroke-width="1.1"/><g fill="#1b5a2f"><circle cx="40.6" cy="18.6" r="2.6"/><circle cx="43.0" cy="17.6" r="2.2"/><circle cx="48.4" cy="18.2" r="2.6"/><circle cx="50.6" cy="20.0" r="2.0"/><circle cx="49.8" cy="29.2" r="2.8"/><circle cx="47.8" cy="27.6" r="2.0"/><circle cx="40.4" cy="34.2" r="2.8"/><circle cx="42.8" cy="32.8" r="2.0"/><circle cx="50.0" cy="34.0" r="2.6"/><circle cx="47.2" cy="20.6" r="1.8"/></g><g fill="#38215f"><ellipse cx="40.0" cy="25.4" rx="1.5" ry="2.3"/><ellipse cx="41.8" cy="22.2" rx="1.5" ry="2.3"/><ellipse cx="48.6" cy="23.6" rx="1.5" ry="2.3"/><ellipse cx="51.4" cy="25.8" rx="1.5" ry="2.3"/><ellipse cx="48.2" cy="34.6" rx="1.5" ry="2.3"/><ellipse cx="43.6" cy="26.6" rx="1.5" ry="2.3"/></g>
 <path d="M69.1 17 C67.6 23 71.1 29 69.3 40 M70.6 18 C71.8 25 68.6 31 70.39999999999999 40" stroke="#9a6b4a" stroke-width="1" fill="none"/><path d="M63.599999999999994 40.4 H75.6" stroke="#2d5a2a" stroke-width="1.1"/><g fill="#1b5a2f"><circle cx="65.0" cy="18.6" r="2.6"/><circle cx="67.4" cy="17.6" r="2.2"/><circle cx="72.8" cy="18.2" r="2.6"/><circle cx="75.0" cy="20.0" r="2.0"/><circle cx="74.2" cy="29.2" r="2.8"/><circle cx="72.2" cy="27.6" r="2.0"/><circle cx="64.8" cy="34.2" r="2.8"/><circle cx="67.2" cy="32.8" r="2.0"/><circle cx="74.4" cy="34.0" r="2.6"/><circle cx="71.6" cy="20.6" r="1.8"/></g><g fill="#38215f"><ellipse cx="64.4" cy="25.4" rx="1.5" ry="2.3"/><ellipse cx="66.2" cy="22.2" rx="1.5" ry="2.3"/><ellipse cx="73.0" cy="23.6" rx="1.5" ry="2.3"/><ellipse cx="75.8" cy="25.8" rx="1.5" ry="2.3"/><ellipse cx="72.6" cy="34.6" rx="1.5" ry="2.3"/><ellipse cx="68.0" cy="26.6" rx="1.5" ry="2.3"/></g>
 <path d="M56.9 33 C55.4 39 58.9 45 57.1 56 M58.4 34 C59.6 41 56.4 47 58.199999999999996 56" stroke="#9a6b4a" stroke-width="1" fill="none"/><path d="M51.4 56.4 H63.4" stroke="#2d5a2a" stroke-width="1.1"/><g fill="#1b5a2f"><circle cx="52.8" cy="34.6" r="2.6"/><circle cx="55.2" cy="33.6" r="2.2"/><circle cx="60.6" cy="34.2" r="2.6"/><circle cx="62.8" cy="36.0" r="2.0"/><circle cx="62.0" cy="45.2" r="2.8"/><circle cx="60.0" cy="43.6" r="2.0"/><circle cx="52.6" cy="50.2" r="2.8"/><circle cx="55.0" cy="48.8" r="2.0"/><circle cx="62.2" cy="50.0" r="2.6"/><circle cx="59.4" cy="36.6" r="1.8"/></g><g fill="#38215f"><ellipse cx="52.2" cy="41.4" rx="1.5" ry="2.3"/><ellipse cx="54.0" cy="38.2" rx="1.5" ry="2.3"/><ellipse cx="60.8" cy="39.6" rx="1.5" ry="2.3"/><ellipse cx="63.6" cy="41.8" rx="1.5" ry="2.3"/><ellipse cx="60.4" cy="50.6" rx="1.5" ry="2.3"/><ellipse cx="55.8" cy="42.6" rx="1.5" ry="2.3"/></g>
</svg>
<!-- matrix logo -->
<svg class="abs" style="left:1790px;top:155px;width:92px;height:36px" viewBox="1790 155 92 36">
 <path d="M1798.600 183.800 L1804 162.500 L1812.200 180.500 L1819.800 162.500 L1824 178 Q1825.500 181.800 1830.800 178.300" fill="none" stroke="#0a69be" stroke-width="3.200" stroke-linejoin="round" stroke-linecap="round"/>
 <text x="1827" y="177.600" font-family="Liberation Sans, sans-serif" font-size="12.500" fill="#0b0b0b" textLength="34" lengthAdjust="spacingAndGlyphs" stroke="#0b0b0b" stroke-width=".25">ATRI</text>
 <text x="1862.500" y="177.600" font-family="Liberation Sans, sans-serif" font-size="12.500" fill="#0a69be" textLength="11.500" lengthAdjust="spacingAndGlyphs" stroke="#0a69be" stroke-width=".3">X</text>
</svg>
<!-- page scrollbar -->
<div class="abs" style="left:1901px;top:109px;width:17px;height:929px;background:#f0f0f0"></div>
<div class="abs" style="left:1902px;top:144px;width:15px;height:809px;background:#cdcdcd"></div>
<svg class="abs" style="left:1902px;top:124px;width:15px;height:14px" viewBox="0 0 15 14"><path d="M1.800 11 L7.500 5 L13.200 11" fill="none" stroke="#555" stroke-width="2.600"/></svg>
<svg class="abs" style="left:1902px;top:1010px;width:15px;height:14px" viewBox="0 0 15 14"><path d="M1.800 3 L7.500 9 L13.200 3" fill="none" stroke="#555" stroke-width="2.600"/></svg>
<!-- window borders -->
<div class="abs" style="left:0;top:109px;width:2px;height:931px;background:linear-gradient(90deg,#aaa,#d8d8d8)"></div>
<div class="abs" style="left:1918px;top:54px;width:2px;height:986px;background:linear-gradient(90deg,#c4c4c4,#9a9a9a)"></div>
<div class="abs" style="left:0;top:1038px;width:1920px;height:2px;background:#d9d9d9"></div>
<div id="taskbar"></div>
<div class="abs" style="left:0;top:1040px;width:1920px;height:1px;background:#0a1f45"></div><div class="abs" style="left:0;top:1041px;width:1920px;height:1px;background:#6a92d2"></div><div class="abs" style="left:0;top:1042px;width:1920px;height:8px;background:linear-gradient(rgba(255,255,255,.10),rgba(255,255,255,0))"></div>
<!-- start orb -->
<svg class="abs" style="left:8px;top:1041px;width:39px;height:39px" viewBox="0 0 39 39">
 <defs><radialGradient id="orb" cx=".5" cy=".95" r=".9"><stop offset="0" stop-color="#25d7f4"/><stop offset=".35" stop-color="#1a7fc0"/><stop offset=".7" stop-color="#1c4f8f"/><stop offset="1" stop-color="#3b6aa8"/></radialGradient>
 <linearGradient id="orbh" x1="0" y1="0" x2="0" y2="1"><stop offset="0" stop-color="#fff" stop-opacity=".75"/><stop offset="1" stop-color="#fff" stop-opacity=".12"/></linearGradient></defs>
 <circle cx="19.300" cy="19.300" r="17.600" fill="url(#orb)" stroke="#8fb0d8" stroke-width="1"/>
 <path d="M3 17 A16.500 16.500 0 0 1 35.600 17 Q19 22 3 17 Z" fill="url(#orbh)"/>
 <path d="M11.800 9.500 Q15.500 7.500 19 9.800 L17.500 17.800 Q14 15.800 10.200 17.600 Z" fill="#e8542a"/>
 <path d="M20.600 10.500 Q24.500 12.600 28.800 10.600 L27 18.800 Q23 20.600 19 18.600 Z" fill="#7cc043"/>
 <path d="M9.800 19.200 Q13.500 17.400 17.200 19.600 L15.600 27.600 Q12 25.600 8.200 27.300 Z" fill="#2f94dc"/>
 <path d="M18.700 20.400 Q22.600 22.500 26.600 20.500 L25 28.600 Q21 30.500 17 28.400 Z" fill="#fcc12c"/>
</svg>
<!-- IE button -->
<div class="abs" style="left:60px;top:1041px;width:58px;height:39px;border:1px solid #e9eef7;border-radius:3px;background:linear-gradient(135deg,#c2cde4 0,#93a8d0 35%,#6e89bd 60%,#8199c8 100%)"></div>
<svg class="abs" style="left:72px;top:1043px;width:34px;height:33px" viewBox="0 0 34 33">
 <path d="M31 17.800 A12.600 12.600 0 1 0 29.600 23.600 L22.600 23.600 A6.600 6.600 0 0 1 12 20.400 L31 20.400 Z M12 15 A6.400 6.400 0 0 1 24.600 15 Z" fill="#49c3f1" stroke="#1e8fd0" stroke-width=".8"/>
 <path d="M3.500 30 C-2 22 10 5 27.500 2.200 C32.500 1.800 32 6.500 29.600 9.600 C30 6.600 28 5.800 24 7 C12.500 10.800 2.500 23 5 28.600 C6 30.600 8.500 30.300 11 29.300 C8 31.800 5 32 3.500 30 Z" fill="#f9b913"/>
</svg>
<!-- folder -->
<svg class="abs" style="left:134px;top:1046px;width:35px;height:31px" viewBox="0 0 35 31">
 <path d="M1.500 4 Q1.500 1.500 4 1.500 H14 L16 4 H28 Q30 4 30 6 V26 H1.500 Z" fill="#f3d777" stroke="#c9a646" stroke-width="1"/>
 <rect x="5" y="2.800" width="3" height="2" fill="#2db34a"/><rect x="13" y="5" width="3" height="2" fill="#d33"/><rect x="21" y="7" width="3" height="2" fill="#2d8fe6"/>
 <path d="M1.500 9 H17 L19.500 6.500 H31 Q32.500 6.500 32.500 8 V26.500 H1.500 Z" fill="#fbe9a3" stroke="#d2b050" stroke-width=".8"/>
 <path d="M5.500 29.500 V19 Q5.500 17 7.500 17 H25.500 Q27.500 17 27.500 19 V29.500 H22 V23 H11 V29.500 Z" fill="#9bd4f2" stroke="#5aa9d6" stroke-width=".8"/>
</svg>
<!-- media player -->
<svg class="abs" style="left:197px;top:1047px;width:30px;height:28px" viewBox="0 0 30 28">
 <path d="M22 3.500 L27.500 4.500 V24 L22 26 Z" fill="#a8d1ee" stroke="#7fb2d9" stroke-width=".6"/>
 <rect x="2" y="2" width="22" height="23.500" fill="#8fc1e6" stroke="#6aa5d2" stroke-width=".8"/>
 <circle cx="12.600" cy="13.500" r="8.300" fill="#f37a1a" stroke="#f9a252" stroke-width=".8"/>
 <path d="M9.600 8.600 L17.800 13.500 L9.600 18.400 Z" fill="#fff"/>
</svg>
<!-- word button -->
<div class="abs" style="left:246px;top:1041px;width:58px;height:39px;border:1px solid #7d9bd0;border-radius:3px;background:linear-gradient(135deg,#6b8fcb 0,#2f5aa8 30%,#23509f 60%,#2c59a6 100%)"></div>
<svg class="abs" style="left:258px;top:1044px;width:34px;height:32px" viewBox="0 0 34 32">
 <rect x="19" y="4.500" width="12.300" height="22.500" fill="#fff"/>
 <path d="M21 8 h8.500 M21 11 h8.500 M21 14 h8.500 M21 17 h8.500 M21 20 h8.500 M21 23 h8.500" stroke="#2b579a" stroke-width="1.300"/>
 <path d="M2 4 L19.800 1.200 V30.800 L2 28 Z" fill="#2b579a"/>
 <text x="10.800" y="21.200" font-family="Liberation Sans, sans-serif" font-weight="bold" font-size="13.500" fill="#fff" text-anchor="middle">W</text>
</svg>
<!-- tray -->
<svg class="abs" style="left:1715px;top:1050px;width:116px;height:22px" viewBox="1715 1050 116 22">
 <path d="M1719 1063.500 L1722.700 1059 L1726.400 1063.500 Z" fill="#fff"/>
 <path d="M1739.500 1054 Q1746.600 1052 1753.800 1054 Q1754.500 1064 1746.600 1068.500 Q1738.800 1064 1739.500 1054 Z" fill="#b21f2d" stroke="#e9e9e9" stroke-width="1.200"/>
 <text x="1746.700" y="1064" font-family="Liberation Sans, sans-serif" font-weight="bold" font-size="9" fill="#fff" text-anchor="middle">M</text>
 <path d="M1767.500 1058 H1770 L1774 1054 V1067.500 L1770 1063.500 H1767.500 Z" fill="#fff" stroke="#c9d3e6" stroke-width=".6"/>
 <rect x="1791.500" y="1056.500" width="10.500" height="8" fill="#1c3f77" stroke="#fff" stroke-width="1.300"/>
 <path d="M1793 1067.300 H1801 M1797 1064.500 V1067" stroke="#fff" stroke-width="1.300"/>
 <path d="M1788.500 1053.500 V1058 H1792.500 V1053.500 M1790.500 1058 V1067.300 H1793" stroke="#fff" stroke-width="1.300" fill="none"/>
 <path d="M1813 1053.500 V1068" stroke="#fff" stroke-width="1.500"/>
 <path d="M1814 1054.500 Q1818 1053 1820.500 1055 Q1823 1057 1826 1055.500 V1062 Q1823 1063.500 1820.500 1061.500 Q1818 1059.800 1814 1061 Z" fill="#fff"/>
 <circle cx="1822" cy="1064.500" r="4.500" fill="#e0322c" stroke="#f3b0ac" stroke-width=".6"/>
 <path d="M1820 1062.500 L1824 1066.500 M1824 1062.500 L1820 1066.500" stroke="#fff" stroke-width="1.400"/>
</svg>
<div class="t" style="left:1844px;top:1046px;font-size:12px;line-height:14px;color:#fff;letter-spacing:-.1px">11:28 AM</div>
<div class="t" style="left:1844px;top:1063px;font-size:12px;line-height:14px;color:#fff;letter-spacing:-.27px">5/25/2016</div>
<div class="abs" style="left:1906px;top:1041px;width:14px;height:39px;border:1px solid #7e96bf;border-right:none;background:linear-gradient(90deg,#34589a,#1f4487)"></div>

</body>
</html>
